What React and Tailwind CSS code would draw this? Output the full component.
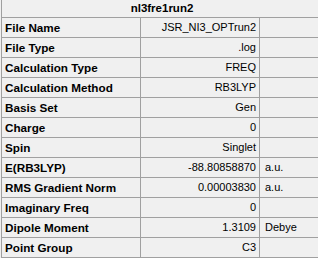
const rows = [
  ['File Name', 'JSR_NI3_OPTrun2', ''],
  ['File Type', '.log', ''],
  ['Calculation Type', 'FREQ', ''],
  ['Calculation Method', 'RB3LYP', ''],
  ['Basis Set', 'Gen', ''],
  ['Charge', '0', ''],
  ['Spin', 'Singlet', ''],
  ['E(RB3LYP)', '-88.80858870', 'a.u.'],
  ['RMS Gradient Norm', '0.00003830', 'a.u.'],
  ['Imaginary Freq', '0', ''],
  ['Dipole Moment', '1.3109', 'Debye'],
  ['Point Group', 'C3', ''],
];

export default function App() {
  return (
    <div
      className="w-[318px] h-[258px] overflow-hidden bg-[#f0f0f0] text-black text-[11px]"
      style={{ fontFamily: '"Liberation Sans", Arial, sans-serif' }}
    >
      <div className="ml-px border-l border-[#a0a0a0]">
        <div className="h-[18px] border-b border-[#a0a0a0] flex items-center justify-center pl-[4px] font-bold text-[11.5px] leading-none">
          nl3fre1run2
        </div>
        {rows.map(([label, value, unit]) => (
          <div key={label} className="grid grid-cols-[139px_119px_1fr] h-[20px] border-b border-[#a0a0a0] leading-none">
            <div className="border-r border-[#a0a0a0] flex items-center pl-[3px] font-bold text-[11.7px]">{label}</div>
            <div className="border-r border-[#a0a0a0] flex items-center justify-end pr-[3px]">{value}</div>
            <div className="flex items-center pl-[5px]">{unit}</div>
          </div>
        ))}
      </div>
    </div>
  );
}
